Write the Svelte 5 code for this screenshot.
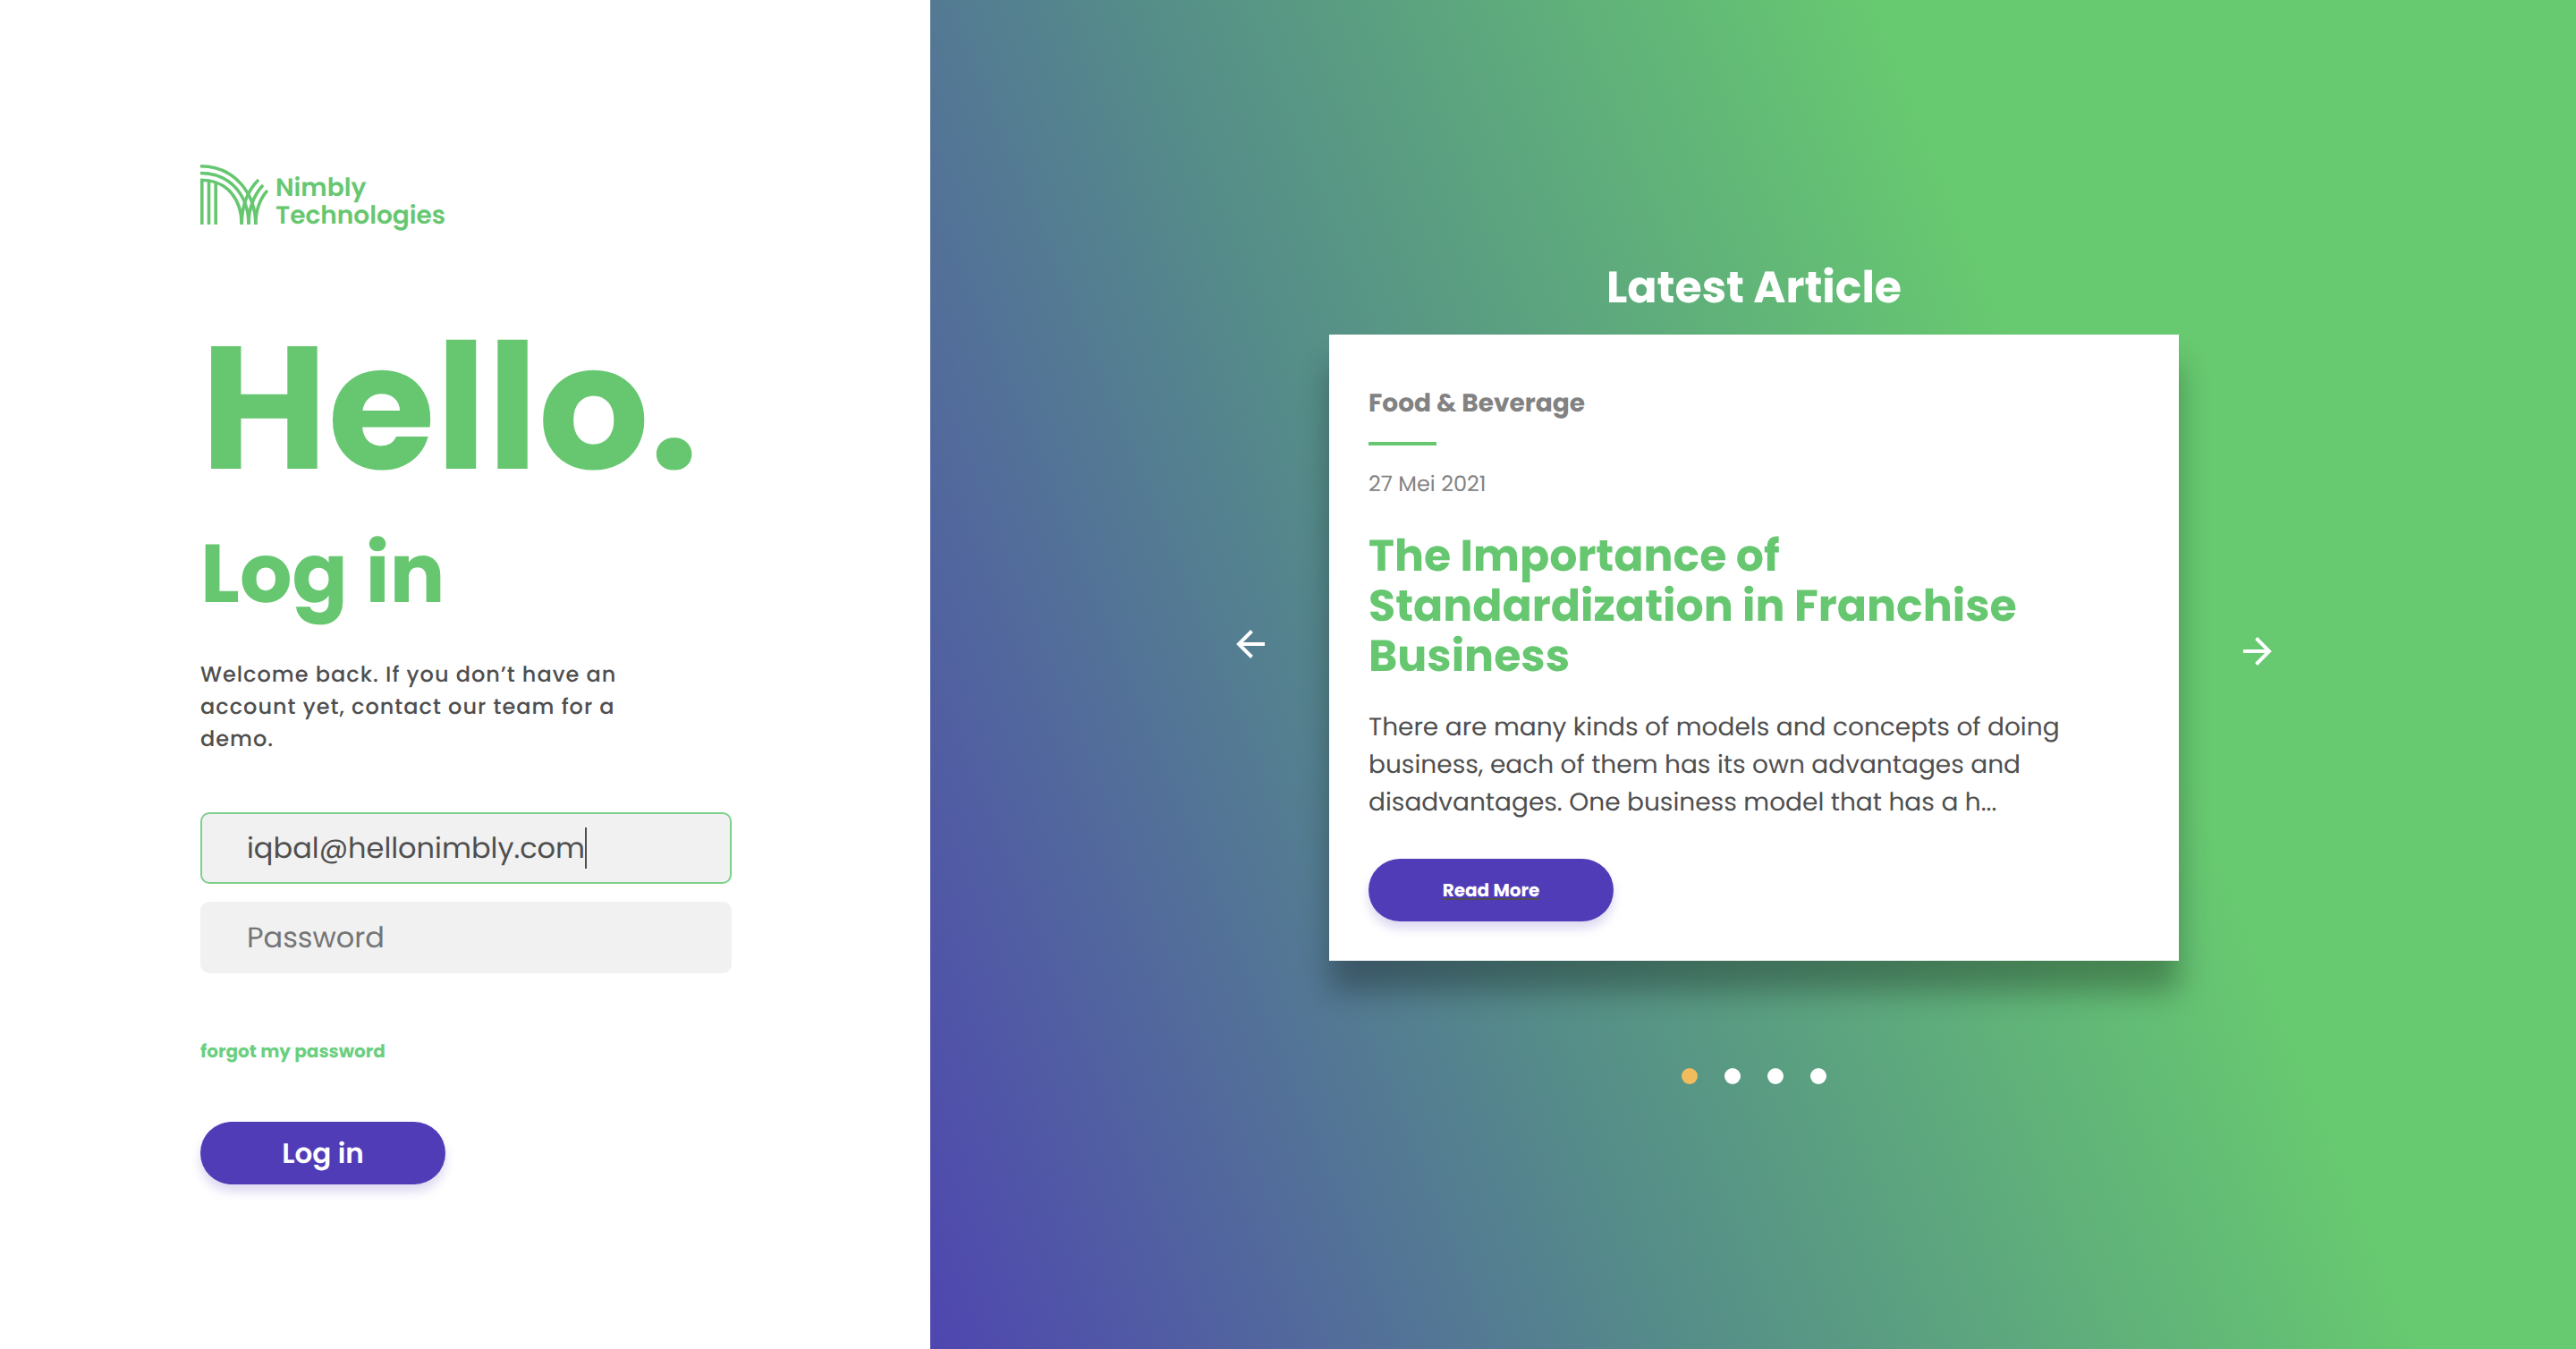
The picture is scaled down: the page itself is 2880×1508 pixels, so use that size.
<script>
  let email = $state('iqbal@hellonimbly.com');
  let password = $state('');
  let active = $state(0);
  const slides = [1, 2, 3, 4];
  const move = (step) => {
    active = (active + step + slides.length) % slides.length;
  };
</script>

<main class="page">
  <section class="login">
    <div class="brand">
      <svg class="mark" viewBox="0 0 76 67" fill="none" stroke="currentColor" stroke-width="3.6" aria-hidden="true">
        <path d="M1.8 67V17.3M9.5 67V18M17.2 67V20" />
        <path d="M0 17.3C31 17 46.2 40 46.2 67" />
        <path d="M0 9.5C35 9.5 54 36 54 67" />
        <path d="M0 1.8C39 1.8 61.8 33 61.8 67" />
        <path d="M46.2 67C46.2 46 52 30 65 17" />
        <path d="M54 67C54 48 59 35 70 23" />
        <path d="M61.8 67C61.8 50 66 39 75 29" />
      </svg>
      <div class="brand-name">Nimbly Technologies</div>
    </div>

    <h1>Hello.</h1>
    <h2>Log in</h2>
    <p class="welcome">Welcome back. If you don’t have an account yet, contact our team for a demo.</p>

    <form onsubmit={(e) => e.preventDefault()}>
      <div class="field">
        <input type="email" aria-label="Email" class="focused" bind:value={email} />
        <div class="caret-layer" aria-hidden="true"><span class="mirror">{email}</span><span class="caret"></span></div>
      </div>
      <div class="field">
        <input type="password" aria-label="Password" placeholder="Password" bind:value={password} />
      </div>
      <a class="forgot" href="#forgot">forgot my password</a>
      <button class="pill" type="submit">Log in</button>
    </form>
  </section>

  <section class="articles">
    <h2 class="latest">Latest Article</h2>
    <div class="carousel">
      <button class="arrow prev" aria-label="Previous article" onclick={() => move(-1)}>
        <svg viewBox="0 0 32 32" fill="none" stroke="currentColor" stroke-width="4"><path d="M32 16H3M17.500 1.500L3 16L17.500 30.500" /></svg>
      </button>
      <article class="card">
        <div class="category">Food &amp; Beverage</div>
        <div class="rule"></div>
        <time datetime="2021-05-27">27 Mei 2021</time>
        <h3>The Importance of Standardization in Franchise Business</h3>
        <p>There are many kinds of models and concepts of doing business, each of them has its own advantages and disadvantages. One business model that has a h...</p>
        <a class="pill small" href="#article"><span>Read More</span></a>
      </article>
      <button class="arrow next" aria-label="Next article" onclick={() => move(1)}>
        <svg viewBox="0 0 32 32" fill="none" stroke="currentColor" stroke-width="4"><path d="M0 16H29M14.500 1.500L29 16L14.500 30.500" /></svg>
      </button>
    </div>
    <div class="dots">
      {#each slides as slide, i}
        <button class="dot" class:active={i === active} aria-label={`Article ${slide}`} onclick={() => (active = i)}></button>
      {/each}
    </div>
  </section>
</main>

<style>
  :global(body) {
    margin: 0;
    background: #fff;
  }
  .page {
    --green: #67c771;
    --purple: #513cb8;
    display: grid;
    grid-template-columns: 13fr 23fr;
    min-height: 100vh;
    font-family: Poppins, Inter, sans-serif;
    text-rendering: geometricPrecision;
    color: #4f4f4f;
  }
  .page *,
  .page {
    box-sizing: border-box;
  }
  h1, h2, h3, p {
    margin: 0;
  }
  input, button {
    font: inherit;
    text-rendering: inherit;
    border: 0;
    padding: 0;
  }
  button {
    cursor: pointer;
  }
  .login {
    padding: 184px 60px 60px 224px;
    background: #fff;
  }
  .brand {
    display: flex;
    align-items: flex-start;
    gap: 8px;
    color: var(--green);
  }
  .mark {
    width: 76px;
    height: 67px;
  }
  .brand-name {
    width: min-content;
    padding-top: 10px;
    font-size: 28px;
    line-height: 31px;
    font-weight: 600;
  }
  h1 {
    margin-top: 105px;
    font-size: 195px;
    line-height: 192px;
    font-weight: 700;
    color: var(--green);
  }
  .login h2 {
    margin-top: 41px;
    font-size: 92px;
    line-height: 96px;
    font-weight: 700;
    color: var(--green);
  }
  .welcome {
    max-width: 500px;
    margin-top: 47px;
    font-size: 24px;
    line-height: 36px;
    font-weight: 500;
    letter-spacing: 1px;
  }
  form {
    display: flex;
    flex-direction: column;
    align-items: flex-start;
    max-width: 594px;
    margin-top: 63px;
  }
  .field {
    position: relative;
    width: 100%;
    margin-bottom: 20px;
  }
  .field input {
    display: block;
    width: 100%;
    height: 80px;
    padding: 2px 50px 0;
    border: 2px solid #f1f1f1;
    border-radius: 10px;
    background: #f1f1f1;
    color: #4f4f4f;
    font-size: 32px;
    outline: none;
  }
  .field input.focused {
    border-color: #7dd08c;
  }
  .field input::placeholder {
    color: #757575;
    opacity: 1;
  }
  .caret-layer {
    position: absolute;
    inset: 0;
    display: flex;
    align-items: center;
    padding: 0 52px;
    font-size: 32px;
    pointer-events: none;
  }
  .mirror {
    visibility: hidden;
  }
  .caret {
    width: 2px;
    height: 46px;
    background: #4f4f4f;
  }
  .forgot {
    margin-top: 52px;
    font-size: 20px;
    line-height: 30px;
    font-weight: 700;
    color: #6bcf7f;
    text-decoration: none;
  }
  .pill {
    display: flex;
    align-items: center;
    justify-content: center;
    width: 274px;
    height: 70px;
    border-radius: 35px;
    background: var(--purple);
    box-shadow: 0 8px 12px rgba(81, 60, 184, 0.2);
    color: #fff;
    font-size: 31px;
    font-weight: 600;
  }
  form .pill {
    margin-top: 64px;
  }
  .articles {
    display: flex;
    flex-direction: column;
    align-items: center;
    padding: 290px 40px 60px 42px;
    background: linear-gradient(68deg, #4f46b0 0%, #558c89 34%, #67c970 68%);
  }
  .latest {
    font-size: 49px;
    line-height: 64px;
    font-weight: 700;
    color: #fff;
  }
  .carousel {
    display: flex;
    align-items: center;
    gap: 72px;
    margin-top: 20px;
  }
  .arrow {
    flex: none;
    background: none;
    color: #fff;
  }
  .arrow svg {
    display: block;
    width: 32px;
    height: 32px;
  }
  .prev {
    padding-bottom: 8px;
  }
  .next {
    padding-top: 8px;
  }
  .card {
    max-width: 950px;
    padding: 59px 44px 44px;
    background: #fff;
    box-shadow: 0 34px 32px rgba(0, 0, 0, 0.3);
  }
  .category {
    font-size: 28px;
    line-height: 36px;
    font-weight: 700;
    color: #828282;
  }
  .rule {
    width: 76px;
    height: 4px;
    margin-top: 25px;
    background: var(--green);
  }
  time {
    display: block;
    margin-top: 26px;
    font-size: 24px;
    line-height: 36px;
    color: #828282;
  }
  h3 {
    max-width: 800px;
    margin-top: 34px;
    font-size: 49px;
    line-height: 56px;
    font-weight: 700;
    color: var(--green);
  }
  .card p {
    margin-top: 30px;
    font-size: 28px;
    line-height: 42px;
  }
  .small {
    margin-top: 42px;
    font-size: 20px;
    font-weight: 700;
    text-decoration: none;
  }
  .small span {
    text-decoration: underline #4f4f4f 2px;
    text-underline-offset: 2px;
    text-decoration-skip-ink: none;
  }
  .dots {
    display: flex;
    gap: 30px;
    margin-top: 120px;
  }
  .dot {
    width: 18px;
    height: 18px;
    border-radius: 50%;
    background: #fff;
  }
  .dot.active {
    background: #f0bc5e;
  }
</style>
